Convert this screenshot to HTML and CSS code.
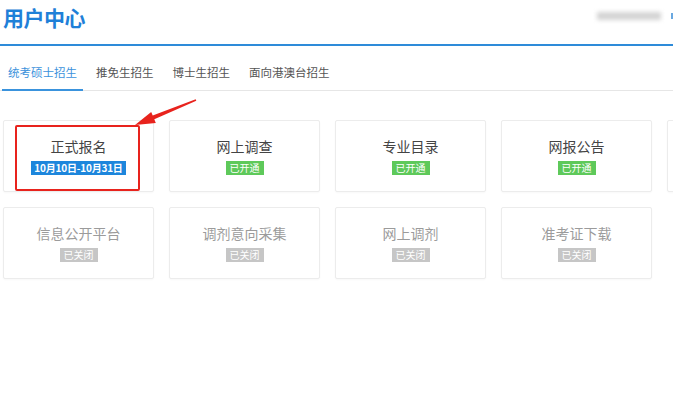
FILE: index.html
```html
<!DOCTYPE html>
<html lang="zh-CN">
<head>
<meta charset="utf-8">
<title>用户中心</title>
<link rel="stylesheet" href="styles.css">
</head>
<body>
<div class="page">
  <header class="header">
    <h1 class="title">用户中心</h1>
    <div class="user">
      <span class="user-blur"></span>
      <span class="user-mark"></span>
    </div>
  </header>
  <nav class="tabs">
    <a class="tab active">统考硕士招生</a>
    <a class="tab">推免生招生</a>
    <a class="tab">博士生招生</a>
    <a class="tab">面向港澳台招生</a>
  </nav>
  <main class="grid">
    <div class="card highlight">
      <div class="card-title">正式报名</div>
      <span class="badge blue">10月10日-10月31日</span>
      <span class="redbox"></span>
    </div>
    <div class="card">
      <div class="card-title">网上调查</div>
      <span class="badge green">已开通</span>
    </div>
    <div class="card">
      <div class="card-title">专业目录</div>
      <span class="badge green">已开通</span>
    </div>
    <div class="card">
      <div class="card-title">网报公告</div>
      <span class="badge green">已开通</span>
    </div>
    <div class="card">
      <div class="card-title">&nbsp;</div>
    </div>
    <div class="card off">
      <div class="card-title">信息公开平台</div>
      <span class="badge gray">已关闭</span>
    </div>
    <div class="card off">
      <div class="card-title">调剂意向采集</div>
      <span class="badge gray">已关闭</span>
    </div>
    <div class="card off">
      <div class="card-title">网上调剂</div>
      <span class="badge gray">已关闭</span>
    </div>
    <div class="card off">
      <div class="card-title">准考证下载</div>
      <span class="badge gray">已关闭</span>
    </div>
  </main>
  <svg class="arrow" width="80" height="40" viewBox="130 95 80 40" aria-hidden="true">
    <polygon fill="#e8231d" points="196.3,100.7 195.7,99.3 152.7,115.6 151.2,111.9 135,125 155.8,122.9 154.3,119.2"/>
  </svg>
</div>
</body>
</html>
```

FILE: styles.css
```css
html, body {
  margin: 0;
  padding: 0;
  background: #ffffff;
  overflow: hidden;
}

body {
  font-family: "Noto Sans CJK SC", "Noto Sans", sans-serif;
  color: #333;
}

.page {
  position: relative;
  width: 673px;
  height: 402px;
  overflow: hidden;
}

.header {
  display: flex;
  align-items: flex-start;
  justify-content: space-between;
  height: 44px;
  border-bottom: 2px solid #2e8bd9;
  box-sizing: content-box;
}

.title {
  margin: 0;
  padding: 3px 0 0 3px;
  font-size: 21px;
  line-height: 28px;
  font-weight: 700;
  color: #1f80d8;
  letter-spacing: -0.5px;
}

.user {
  display: flex;
  align-items: center;
  gap: 10px;
  padding-top: 12px;
}

.user-blur {
  width: 64px;
  height: 8px;
  background: #d4d4d4;
  filter: blur(2px);
}

.user-mark {
  width: 3px;
  height: 6px;
  background: #6aa8e0;
  margin-right: -1px;
}

.tabs {
  display: flex;
  gap: 7px;
  padding-left: 2px;
  border-bottom: 1px solid #e6e6e6;
}

.tab {
  padding: 17px 6px 8px;
  font-size: 11.5px;
  line-height: 18px;
  color: #555;
  border-bottom: 2px solid transparent;
  margin-bottom: -1px;
  white-space: nowrap;
}

.tab.active {
  color: #3c92dc;
  border-bottom-color: #3a93dd;
}

.grid {
  display: grid;
  grid-template-columns: repeat(5, 151px);
  grid-auto-rows: 72px;
  gap: 15px;
  margin-top: 29px;
  padding-left: 3px;
  width: 900px;
}

.card {
  position: relative;
  display: flex;
  flex-direction: column;
  align-items: center;
  justify-content: center;
  gap: 5px;
  border: 1px solid #ececec;
  border-radius: 2px;
  background: #fff;
  box-shadow: 0 1px 2px rgba(0, 0, 0, 0.03);
  box-sizing: border-box;
}

.card-title {
  font-size: 14px;
  line-height: 19px;
  color: #444;
}

.card.off .card-title {
  color: #9b9b9b;
}

.badge {
  display: inline-block;
  font-size: 10px;
  line-height: 14px;
  height: 14px;
  padding: 0 4px;
  color: #fff;
}

.badge.blue {
  background: #1d86dc;
  font-weight: 700;
  padding: 0 3px;
  letter-spacing: -0.2px;
}

.badge.green {
  background: #5ec95a;
}

.badge.gray {
  background: #c6c6c6;
}

.redbox {
  position: absolute;
  left: 11px;
  top: 4px;
  width: 125px;
  height: 66px;
  border: 2px solid #e8231d;
  border-radius: 2px;
  box-sizing: border-box;
}

.arrow {
  position: absolute;
  left: 130px;
  top: 95px;
}
```
